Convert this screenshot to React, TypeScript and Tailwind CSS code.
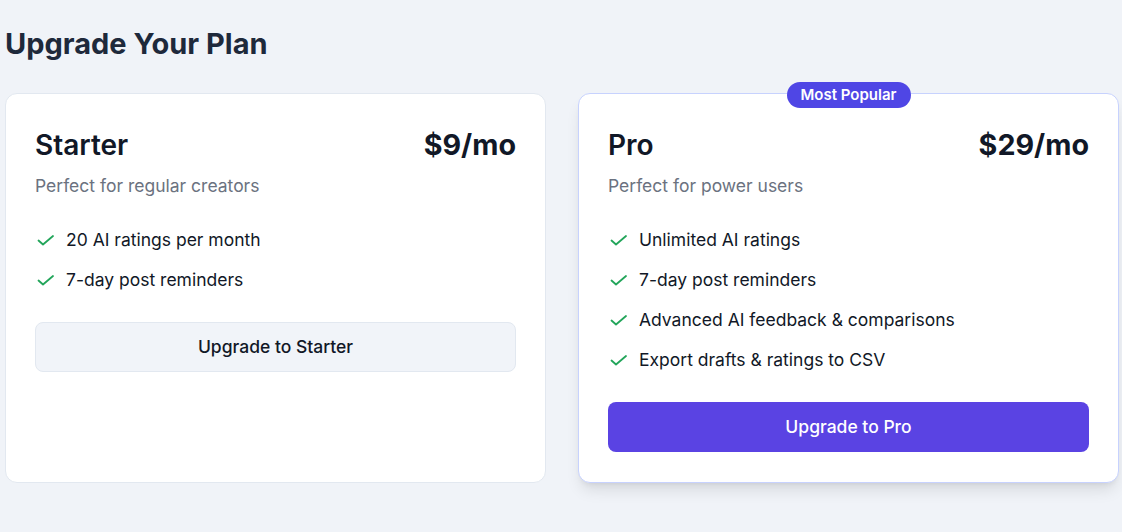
import React from "react";

function Check() {
  return (
    <svg width="20" height="20" viewBox="0 0 20 20" fill="none" className="shrink-0">
      <path d="M3.5 10.5 L8 14.5 L18 6" stroke="#22a55a" strokeWidth="1.8" strokeLinecap="round" strokeLinejoin="round" />
    </svg>
  );
}

function Feature({ text }: { text: string }) {
  return (
    <li className="flex items-center gap-[11px] text-[17.5px] leading-6 text-[#111827]">
      <Check />
      <span>{text}</span>
    </li>
  );
}

export default function App() {
  return (
    <div
      className="min-h-[532px] bg-[#f0f3f8] pl-[5px] pr-[3px] pt-[26px]"
      style={{ fontFamily: "Inter, 'Noto Sans', sans-serif" }}
    >
      <h1 className="text-[29px] leading-9 font-bold text-[#1e293b] mb-[31px]">Upgrade Your Plan</h1>
      <div className="grid grid-cols-2 gap-8">
        <div className="bg-white border border-[#e2e8f0] rounded-xl px-[29px] pt-[30px] pb-[30px]">
          <div className="flex items-center justify-between leading-[42px]">
            <h2 className="text-[28px] font-semibold text-[#111827]">Starter</h2>
            <div className="text-[28.7px] font-bold text-[#111827]">$9/mo</div>
          </div>
          <p className="mt-2 text-[17.5px] leading-6 text-[#6b7280]">Perfect for regular creators</p>
          <ul className="mt-[30px] flex flex-col gap-4">
            <Feature text="20 AI ratings per month" />
            <Feature text="7-day post reminders" />
          </ul>
          <button className="mt-[30px] w-full h-[50px] rounded-lg bg-[#f1f4f9] border border-[#e2e8f0] text-[17.5px] font-medium text-[#111827]">
            Upgrade to Starter
          </button>
        </div>
        <div className="relative bg-white border border-[#c7d2fe] rounded-xl px-[29px] pt-[30px] pb-[30px] shadow-lg">
          <div className="absolute -top-3 left-1/2 -translate-x-1/2 bg-[#4f46e5] text-white text-[15px] font-semibold rounded-full h-[26px] flex items-center px-[14px] whitespace-nowrap">
            Most Popular
          </div>
          <div className="flex items-center justify-between leading-[42px]">
            <h2 className="text-[28px] font-semibold text-[#111827]">Pro</h2>
            <div className="text-[28.7px] font-bold text-[#111827]">$29/mo</div>
          </div>
          <p className="mt-2 text-[17.5px] leading-6 text-[#6b7280]">Perfect for power users</p>
          <ul className="mt-[30px] flex flex-col gap-4">
            <Feature text="Unlimited AI ratings" />
            <Feature text="7-day post reminders" />
            <Feature text="Advanced AI feedback & comparisons" />
            <Feature text="Export drafts & ratings to CSV" />
          </ul>
          <button className="mt-[30px] w-full h-[50px] rounded-lg bg-[#5a43e3] text-[17.5px] font-medium text-white">
            Upgrade to Pro
          </button>
        </div>
      </div>
    </div>
  );
}
